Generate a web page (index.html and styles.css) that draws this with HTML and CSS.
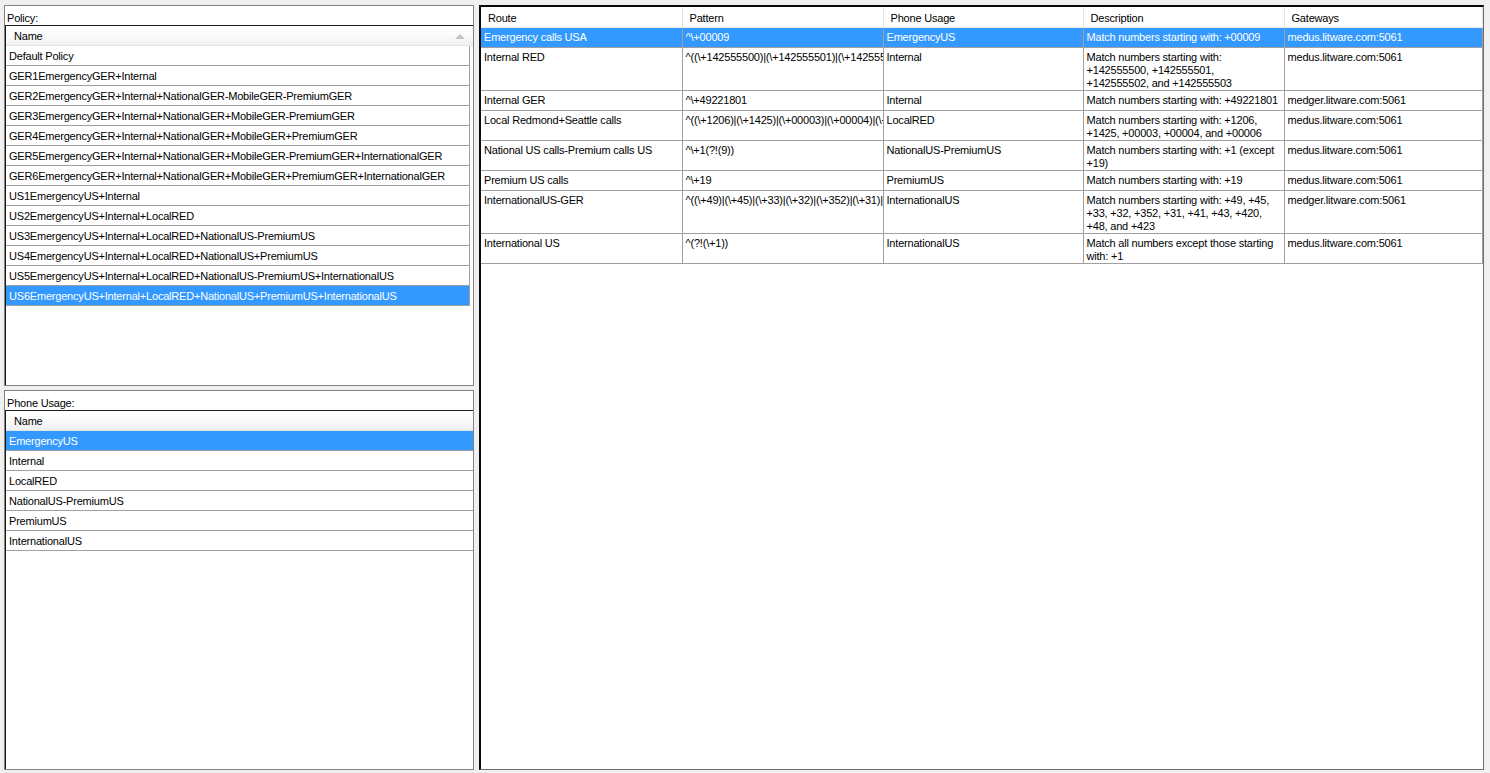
FILE: index.html
```html
<!DOCTYPE html>
<html>
<head>
<meta charset="utf-8">
<link rel="stylesheet" href="styles.css">
</head>
<body>
<div class="app">
  <div class="leftcol">
    <div class="box policy">
      <div class="label">Policy:</div>
      <div class="list">
        <div class="lhead"><span class="hname">Name</span><span class="sort"></span></div>
        <div class="row"><span class="cell">Default Policy</span></div>
        <div class="row"><span class="cell">GER1EmergencyGER+Internal</span></div>
        <div class="row"><span class="cell">GER2EmergencyGER+Internal+NationalGER-MobileGER-PremiumGER</span></div>
        <div class="row"><span class="cell">GER3EmergencyGER+Internal+NationalGER+MobileGER-PremiumGER</span></div>
        <div class="row"><span class="cell">GER4EmergencyGER+Internal+NationalGER+MobileGER+PremiumGER</span></div>
        <div class="row"><span class="cell">GER5EmergencyGER+Internal+NationalGER+MobileGER-PremiumGER+InternationalGER</span></div>
        <div class="row"><span class="cell">GER6EmergencyGER+Internal+NationalGER+MobileGER+PremiumGER+InternationalGER</span></div>
        <div class="row"><span class="cell">US1EmergencyUS+Internal</span></div>
        <div class="row"><span class="cell">US2EmergencyUS+Internal+LocalRED</span></div>
        <div class="row"><span class="cell">US3EmergencyUS+Internal+LocalRED+NationalUS-PremiumUS</span></div>
        <div class="row"><span class="cell">US4EmergencyUS+Internal+LocalRED+NationalUS+PremiumUS</span></div>
        <div class="row"><span class="cell">US5EmergencyUS+Internal+LocalRED+NationalUS-PremiumUS+InternationalUS</span></div>
        <div class="row sel"><span class="cell">US6EmergencyUS+Internal+LocalRED+NationalUS+PremiumUS+InternationalUS</span></div>
      </div>
    </div>
    <div class="box usage">
      <div class="label">Phone Usage:</div>
      <div class="list">
        <div class="lhead"><span class="hname">Name</span></div>
        <div class="row full sel"><span class="cell">EmergencyUS</span></div>
        <div class="row full"><span class="cell">Internal</span></div>
        <div class="row full"><span class="cell">LocalRED</span></div>
        <div class="row full"><span class="cell">NationalUS-PremiumUS</span></div>
        <div class="row full"><span class="cell">PremiumUS</span></div>
        <div class="row full"><span class="cell">InternationalUS</span></div>
      </div>
    </div>
  </div>
  <div class="rightpane">
    <table class="grid">
      <colgroup>
        <col class="c1"><col class="c2"><col class="c3"><col class="c4"><col class="c5">
      </colgroup>
      <thead>
        <tr><th>Route</th><th>Pattern</th><th>Phone Usage</th><th>Description</th><th>Gateways</th></tr>
      </thead>
      <tbody>
        <tr class="sel"><td>Emergency calls USA</td><td class="pat">^\+00009</td><td>EmergencyUS</td><td>Match numbers starting with: +00009</td><td>medus.litware.com:5061</td></tr>
        <tr class="h3"><td>Internal RED</td><td class="pat">^((\+142555500)|(\+142555501)|(\+142555502)|(\+142555503))</td><td>Internal</td><td>Match numbers starting with: +142555500, +142555501, +142555502,&nbsp;and&nbsp;+142555503</td><td>medus.litware.com:5061</td></tr>
        <tr><td>Internal GER</td><td class="pat">^\+49221801</td><td>Internal</td><td>Match numbers starting with: +49221801</td><td>medger.litware.com:5061</td></tr>
        <tr class="h2"><td>Local Redmond+Seattle calls</td><td class="pat">^((\+1206)|(\+1425)|(\+00003)|(\+00004)|(\+00006))</td><td>LocalRED</td><td>Match numbers starting with: +1206, +1425, +00003, +00004, and +00006</td><td>medus.litware.com:5061</td></tr>
        <tr class="h2"><td>National US calls-Premium calls US</td><td class="pat">^\+1(?!(9))</td><td>NationalUS-PremiumUS</td><td>Match numbers starting with: +1 (except +19)</td><td>medus.litware.com:5061</td></tr>
        <tr><td>Premium US calls</td><td class="pat">^\+19</td><td>PremiumUS</td><td>Match numbers starting with: +19</td><td>medus.litware.com:5061</td></tr>
        <tr class="h3"><td>InternationalUS-GER</td><td class="pat">^((\+49)|(\+45)|(\+33)|(\+32)|(\+352)|(\+31)|(\+41)|(\+43)|(\+420)|(\+48)|(\+423))</td><td>InternationalUS</td><td>Match numbers starting with: +49, +45, +33, +32, +352, +31, +41, +43, +420, +48, and +423</td><td>medger.litware.com:5061</td></tr>
        <tr class="h2"><td>International US</td><td class="pat">^(?!(\+1))</td><td>InternationalUS</td><td>Match all numbers except those starting with: +1</td><td>medus.litware.com:5061</td></tr>
      </tbody>
    </table>
  </div>
</div>
</body>
</html>
```
FILE: styles.css
```css
html, body {
  margin: 0;
  padding: 0;
  background: #f0f0f0;
  width: 1490px;
  height: 773px;
  overflow: hidden;
  font-family: "Liberation Sans", Arial, sans-serif;
  font-size: 11px;
  letter-spacing: -0.2px;
  color: #000;
}
.app {
  display: flex;
  gap: 5px;
  padding: 5px 6px 0 4px;
  height: 773px;
  box-sizing: border-box;
}
.leftcol {
  width: 470px;
  display: flex;
  flex-direction: column;
  gap: 4px;
}
.box {
  background: #fff;
  border: 1px solid #828282;
  display: flex;
  flex-direction: column;
  box-sizing: border-box;
}
.policy { height: 381px; }
.usage { height: 380px; }
.label {
  height: 19px;
  line-height: 18px;
  padding: 3px 0 0 2px;
  box-sizing: border-box;
}
.list {
  flex: 1;
  border-top: 1px solid #1a1a1a;
  border-left: 1px solid #1a1a1a;
  background: #fff;
}
.lhead {
  height: 20px;
  display: flex;
  align-items: center;
  justify-content: space-between;
  background: linear-gradient(#ffffff 0%, #fbfbfb 50%, #eef0f2 100%);
  border-bottom: 1px solid #e3e4e6;
  box-sizing: border-box;
  padding: 1px 8px 0 8px;
}
.sort {
  width: 0;
  height: 0;
  border-left: 5px solid transparent;
  border-right: 5px solid transparent;
  border-bottom: 5px solid #c4c4c4;
  margin-top: 1px;
}
.row {
  height: 20px;
  display: flex;
}
.row .cell {
  width: 464px;
  height: 20px;
  box-sizing: border-box;
  border-bottom: 1px solid #a0a0a0;
  border-right: 1px solid #a0a0a0;
  padding: 4px 0 0 3px;
  white-space: nowrap;
  overflow: hidden;
}
.row.full .cell {
  width: 100%;
  border-right: none;
}
.row.sel .cell {
  background: #3399ff;
  color: #fff;
}
.rightpane {
  flex: 1;
  height: 765px;
  background: #fff;
  border-top: 2px solid #0a0a0a;
  border-left: 2px solid #0a0a0a;
  border-right: 1px solid #6d6d6d;
  border-bottom: 1px solid #6d6d6d;
  box-sizing: border-box;
}
.grid {
  border-collapse: collapse;
  table-layout: fixed;
  width: 1001px;
}
.c1 { width: 201px; }
.c2 { width: 201px; }
.c3 { width: 200px; }
.c4 { width: 201px; }
.c5 { width: 198px; }
.grid th {
  height: 20px;
  font-weight: normal;
  text-align: left;
  padding: 2px 0 0 7px;
  box-sizing: border-box;
  border-right: 1px solid #e3e4e6;
  border-bottom: 1px solid #e8e8e8;
  background: #fff;
}
.grid td {
  height: 20px;
  vertical-align: top;
  padding: 3px 0 0 3px;
  line-height: 13px;
  border: 1px solid #a0a0a0;
  border-top: none;
  box-sizing: border-box;
  overflow: hidden;
}
.grid td:first-child { border-left: none; }
.grid td.pat { white-space: nowrap; }
.grid tr.h2 td { height: 29px; }
.grid tr.h3 td { height: 43px; }
.grid tr.sel td {
  background: #3399ff;
  color: #fff;
}
```
